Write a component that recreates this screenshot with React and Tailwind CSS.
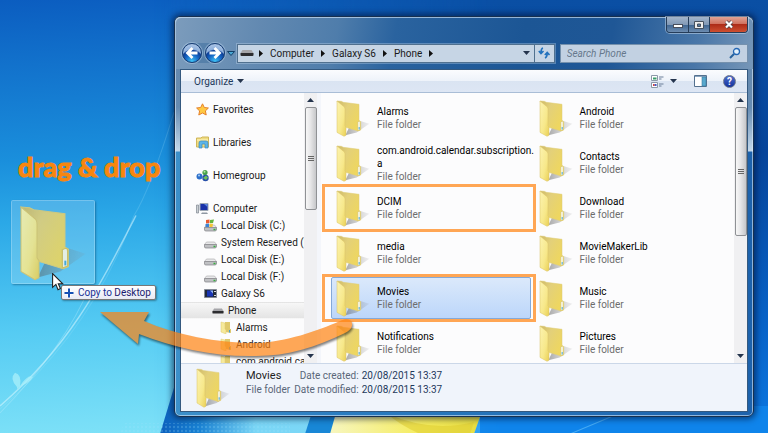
import { useState } from 'react'
import clsx from 'clsx'

const crumbs = ['Computer', 'Galaxy S6', 'Phone']

const tree = [
  { name: 'Favorites', icon: 'star', level: 0 },
  { name: 'Libraries', icon: 'library', level: 0 },
  { name: 'Homegroup', icon: 'homegroup', level: 0 },
  { name: 'Computer', icon: 'computer', level: 0 },
  { name: 'Local Disk (C:)', icon: 'system', level: 1 },
  { name: 'System Reserved (D:)', icon: 'disk', level: 1 },
  { name: 'Local Disk (E:)', icon: 'disk', level: 1 },
  { name: 'Local Disk (F:)', icon: 'disk', level: 1 },
  { name: 'Galaxy S6', icon: 'device', level: 1 },
  { name: 'Phone', icon: 'phone', level: 2 },
  { name: 'Alarms', icon: 'folder', level: 3 },
  { name: 'Android', icon: 'folder', level: 3 },
  { name: 'com.android.ca', icon: 'folder', level: 3 },
]

const files = [
  { name: 'Alarms' },
  { name: 'Android' },
  { name: 'com.android.calendar.subscription.a' },
  { name: 'Contacts' },
  { name: 'DCIM', marked: true },
  { name: 'Download' },
  { name: 'media' },
  { name: 'MovieMakerLib' },
  { name: 'Movies', marked: true },
  { name: 'Music' },
  { name: 'Notifications' },
  { name: 'Pictures' },
]

const indent = ['pl-3.5', 'pl-5.5', 'pl-7.5', 'pl-9.5']

export default function App() {
  const [selected, setSelected] = useState('Movies')

  return (
    <main className="relative flex min-h-screen overflow-hidden bg-[#1583d8] font-[Roboto,'Open_Sans',sans-serif] text-[10px] leading-[13px] text-[#1a1a1a]">
      <Wallpaper />
      <DragSource />
      <section className="relative mt-4 mr-3.5 mb-[17px] flex min-w-0 flex-1 flex-col self-start rounded-md border border-[#17304f] bg-[linear-gradient(180deg,#6488ad_0,#668bb1_90px,#c3d8eb_134px,transparent_135px),linear-gradient(90deg,#3c90ca,#2a7cc0_30%,#1d62ac)] px-[5px] pb-1 shadow-[0_0_6px_2px_rgba(0,15,50,0.6),inset_0_0_0_1px_rgba(220,235,250,0.6)]">
        <TitleBar />
        <div className="relative border border-[#34597f] bg-[#fcfcfd]">
          <Toolbar />
          <div className="flex h-[270px] overflow-hidden">
            <FolderTree />
            <ScrollBar thumb="h-[103px]" />
            <div className="w-1 shrink-0 bg-[#f4f6fb]" />
            <FileList selected={selected} onSelect={setSelected} />
            <ScrollBar thumb="h-[129px]" />
          </div>
          <Details name={selected} />
        </div>
      </section>
      <DragArrow />
    </main>
  )
}

function Wallpaper() {
  return (
    <div className="absolute inset-0 bg-[linear-gradient(177deg,#0b5dc0_0%,#1272cc_14%,#1a8fdc_34%,#2ba8e7_47%,#55cbf3_70%,#8ae8f9_100%)]">
      <div className="absolute inset-0 bg-[linear-gradient(180deg,#0a4fa4_0%,#06449a_35%,#0863c8_75%,#0c78e2_100%)] [mask-image:linear-gradient(90deg,transparent_20%,black_65%)]" />
      <svg viewBox="0 0 768 433" preserveAspectRatio="none" className="absolute inset-0 size-full">
        <defs>
          <linearGradient id="band" x1="0" x2="1">
            <stop offset="0" stopColor="#0b60bd" />
            <stop offset="0.12" stopColor="#1880d2" />
            <stop offset="0.3" stopColor="#7ad6f6" />
            <stop offset="1" stopColor="#80dcf8" />
          </linearGradient>
          <linearGradient id="gold" x1="0" x2="1">
            <stop offset="0" stopColor="#f7f6bf" />
            <stop offset="0.6" stopColor="#f5ec5d" />
            <stop offset="1" stopColor="#e6dc3e" />
          </linearGradient>
          <pattern id="dots" width="4" height="4" patternUnits="userSpaceOnUse">
            <circle cx="2" cy="2" r="0.8" fill="#9fe2fa" fillOpacity="0.5" />
          </pattern>
        </defs>
        <path d="M176 380L160 433H480V380Z" fill="url(#band)" />
        <path d="M124 422H290V433H120Z" fill="url(#dots)" />
        <path d="M314 405L305 433H332L338 405Z" fill="#1887d6" />
        <path d="M338 405L330 433H474L484 405Z" fill="url(#gold)" />
        <path d="M386 412Q430 432 474 421L470 433H420Q400 424 386 412Z" fill="#e0cf35" fillOpacity="0.6" />
        <path d="M484 405L474 433H768V405Z" fill="#118af0" fillOpacity="0.7" />
        <path d="M570 433L620 412" stroke="#6bc4fa" strokeOpacity="0.6" fill="none" />
        <path d="M174 112Q150 190 134 215Q92 330 0 408" stroke="#b9f0fd" strokeOpacity="0.18" fill="none" />
        <path d="M136 215C100 285 70 345 0 405" stroke="#d8f7ff" strokeOpacity="0.55" strokeWidth="1.5" fill="none" />
        <path d="M90 285Q66 345 0 412" stroke="#c9f4ff" strokeOpacity="0.3" fill="none" />
        <path d="M17 386Q9 378 15 372Q22 374 20 385Q28 373 33 376Q30 382 21 385L17 388Z" fill="#a9effa" fillOpacity="0.75" />
      </svg>
    </div>
  )
}

function DragSource() {
  return (
    <aside className="relative w-[174px] shrink-0 pt-[153px]">
      <p className="pl-[18px] font-[Lato,sans-serif] text-[27px] leading-7 font-black whitespace-nowrap text-[#f7860f] [-webkit-text-stroke:1px_#f7860f]">drag &amp; drop</p>
      <div className="mt-[19px] ml-[11px] flex h-[84px] w-[84px] justify-center rounded-xs border border-white/25 bg-white/20 pt-1 opacity-90 shadow-[1px_1px_2px_rgba(0,60,100,0.5)]">
        <FolderIcon className="h-[76px] w-[68px]" />
      </div>
      <svg viewBox="0 0 20 30" className="absolute top-[273px] left-[52px] h-[18px] w-3">
        <path d="M1 1V24L6.500 19L10 28L14 26L10.500 18H18Z" fill="#fff" stroke="#222" strokeWidth="1.800" />
      </svg>
      <div className="absolute top-[285px] left-[61px] flex h-[15px] items-center gap-1 rounded-xs border border-[#777] bg-[linear-gradient(#fff,#e8eaf4)] px-0.5 pr-1 whitespace-nowrap text-[#172f94] shadow-[1px_1px_2px_rgba(0,0,0,0.35)]">
        <svg viewBox="0 0 10 10" className="size-2.5">
          <path d="M5 1V9M1 5H9" stroke="#fff" strokeWidth="3.500" />
          <path d="M5 0.500V9.500M0.500 5H9.500" stroke="#1550b4" strokeWidth="2" />
        </svg>
        <span>Copy to <span className="text-[#1b1b70]">Desktop</span></span>
      </div>
    </aside>
  )
}

function DragArrow() {
  return (
    <svg viewBox="0 0 260 52" className="pointer-events-none absolute top-[309px] left-[98px] h-[52px] w-[260px] opacity-70 drop-shadow-[1px_2px_1px_rgba(0,0,0,0.7)]">
      <path
        d="M2 3H51L46 12C78 26 118 34 158 34C188 33 219 22 242 12C248 9 253 10 254 14C255 19 251 22 247 24C218 38 190 47 158 47C116 48 77 39 41 25L40 35Z"
        fill="#ff8412"
      />
    </svg>
  )
}

function TitleBar() {
  return (
    <header className="-mx-[5px] flex flex-col rounded-t-md bg-[linear-gradient(100deg,#7c9cbc_0%,#6289b1_15%,#4f7dab_28%,#2a639f_38%,#1c5695_60%,#1f5796_75%,#4a77a8_90%,#7797b8_100%)] px-[5px] pb-[5px] shadow-[inset_0_1px_0_rgba(210,230,250,0.65),inset_1px_0_0_rgba(210,230,250,0.5)]">
      <div className="flex h-[16px] self-end overflow-hidden rounded-b-sm border border-t-0 border-[#263d59] shadow-[0_0_0_1px_rgba(220,235,250,0.45)]">
        <button aria-label="Minimize" className="flex w-[22px] items-center justify-center border-r border-[#263d59] bg-[linear-gradient(#a3b5cb_0,#8299b6_50%,#3e6490_51%,#6d8db1)]">
          <span className="mt-0.5 h-1 w-2.5 border border-[#4a4f5c] bg-white" />
        </button>
        <button aria-label="Maximize" className="flex w-[21px] items-center justify-center border-r border-[#263d59] bg-[linear-gradient(#a3b5cb_0,#8299b6_50%,#3e6490_51%,#6d8db1)]">
          <svg viewBox="0 0 10 8" className="h-2 w-2.5">
            <path d="M0.500 0.500H9.500V7.500H0.500Z" fill="#eee" stroke="#46505e" />
            <path d="M3.500 3H6.500V5.500H3.500Z" fill="#57799f" stroke="#46505e" />
          </svg>
        </button>
        <button aria-label="Close" className="flex w-[37px] items-center justify-center bg-[linear-gradient(#e0a394_0,#cf6f5c_48%,#ad2c18_50%,#ce4f30)]">
          <svg viewBox="0 0 10 9" className="h-[9px] w-2.5">
            <path d="M2 1.500L8 7.500M8 1.500L2 7.500" stroke="#4b4046" strokeWidth="3.600" />
            <path d="M2 1.500L8 7.500M8 1.500L2 7.500" stroke="#fff" strokeWidth="2.200" />
          </svg>
        </button>
      </div>
      <div className="mt-[9px] flex h-[22px] items-center pl-0.5">
        <div className="flex gap-[3px] rounded-full bg-[#4473a0]/60">
          <NavButton label="Back" />
          <NavButton label="Forward" flip />
        </div>
        <button aria-label="Recent pages" className="ml-0.5 flex w-2 justify-center">
          <svg viewBox="0 0 8 5" className="h-[5px] w-2">
            <path d="M0.500 0.500H7.500L4 4.500Z" fill="#49a7d4" stroke="#123f68" />
          </svg>
        </button>
        <div className="ml-0.5 flex h-[19px] min-w-0 flex-[315] items-center border border-[#51718f] bg-[#c6d5e5] shadow-[0_0_0_1px_rgba(200,220,240,0.35)]">
          <PhoneIcon className="mr-[-2px] ml-0.5 h-2 w-3.5" />
          {crumbs.map((crumb) => (
            <span key={crumb} className="flex items-center">
              <Caret className="mx-[7px] h-[7px] w-1" />
              <button>{crumb}</button>
            </span>
          ))}
          <Caret className="mx-[7px] h-[7px] w-1" />
          <button aria-label="Previous locations" className="ml-auto pr-1">
            <DownArrow />
          </button>
          <button aria-label="Refresh" className="flex h-full w-5 items-center justify-center border-l border-[#51718f]">
            <svg viewBox="0 0 12 12" className="size-3" fill="none" stroke="#2272bd" strokeWidth="1.600">
              <path d="M5 1Q3 1.500 3 5.500M0.800 4L3 6.500L5.500 4" />
              <path d="M7 11Q9.300 10 9.200 6M6.800 8L9.200 5.500L11.500 8" />
            </svg>
          </button>
        </div>
        <label className="ml-[5px] flex h-[19px] min-w-0 flex-[174] items-center border border-[#7591ad] bg-[#c2d1e2] px-1.5">
          <input type="text" aria-label="Search Phone" placeholder="Search Phone" className="min-w-0 flex-1 bg-transparent italic outline-none placeholder:text-[#66788c]" />
          <svg viewBox="0 0 12 12" className="size-3" fill="none">
            <path d="M1 11L5 7" stroke="#27629c" strokeWidth="2" />
            <circle cx="7.500" cy="4.500" r="3" fill="#e4f2fc" stroke="#2467b4" strokeWidth="1.300" />
          </svg>
        </label>
      </div>
    </header>
  )
}

function NavButton({ label, flip }) {
  return (
    <button aria-label={label} className="size-5 rounded-full border border-[#173d73] bg-[radial-gradient(circle_at_50%_95%,#3fc3f5_0%,#1565c4_35%,#0d3f97_55%,#8fb1dd_62%,#b7cde9_100%)] shadow-[0_0_0_1px_rgba(190,215,240,0.45)]">
      <svg viewBox="0 0 18 18" className={clsx('size-[18px]', flip && 'rotate-180')}>
        <path d="M9.500 4L4.500 9L9.500 14M5 9H14.500" fill="none" stroke="#fff" strokeWidth="2.800" />
      </svg>
    </button>
  )
}

function Toolbar() {
  return (
    <div className="flex h-[23px] items-center border-b border-[#a9bdd6] bg-[linear-gradient(#fbfcfe_0,#eef3fa_48%,#dae4f2_50%,#dde6f4)] pr-[11px] pl-[13px] text-[#1e395b]">
      <button className="flex items-center gap-1">
        Organize <DownArrow />
      </button>
      <button aria-label="Change your view" className="ml-auto">
        <svg viewBox="0 0 13 13" className="size-[13px]">
          <path d="M0.500 0.500H6.500V5.500H0.500ZM0.500 7.500H6.500V12.500H0.500Z" fill="#fff" stroke="#8b98a8" />
          <path d="M2 3.500H5.500" stroke="#399c69" strokeWidth="2" />
          <path d="M2 10H3.700" stroke="#d04444" strokeWidth="2" />
          <path d="M3.700 10H5.500" stroke="#3b55c5" strokeWidth="2" />
          <path d="M8 2H12.500M8 4H10.500M8 9H12.500M8 11H10.500" stroke="#6a7f99" />
        </svg>
      </button>
      <button aria-label="More view options" className="mr-[17px] ml-1.5">
        <DownArrow />
      </button>
      <button aria-label="Show the preview pane">
        <svg viewBox="0 0 13 12" className="h-3 w-[13px]">
          <path d="M0.500 0.500H12.500V11.500H0.500Z" fill="#fff" stroke="#54718f" />
          <path d="M1 1.500H12" stroke="#8ba5c0" />
          <path d="M8 2H12V11H8Z" fill="#58a8cd" stroke="#39799f" strokeWidth="0.600" />
        </svg>
      </button>
      <button aria-label="Help" className="ml-4 size-[13px] rounded-full border border-[#6b7589] bg-[linear-gradient(#4d6ccc,#12329d)] text-[10px] leading-[11px] font-bold text-white">
        ?
      </button>
    </div>
  )
}

function FolderTree() {
  return (
    <ul className="w-[123px] shrink-0 overflow-hidden pt-2">
      {tree.map((node, i) => (
        <li key={node.name + i} className={clsx(i < 3 && 'mb-4')}>
          <button
            className={clsx(
              'flex h-[17px] w-full items-center gap-1 border border-transparent whitespace-nowrap',
              indent[node.level],
              node.name === 'Phone' && 'border-[#dcdcdc] bg-[linear-gradient(#f7f7f7,#e4e4e4)]',
            )}
          >
            <TreeIcon type={node.icon} />
            {node.name}
          </button>
        </li>
      ))}
    </ul>
  )
}

function FileList({ selected, onSelect }) {
  return (
    <ul className="grid min-w-0 flex-1 grid-cols-2 content-start gap-x-[3px] gap-y-[3px] pt-1 pr-px pl-2.5">
      {files.map((file) => (
        <li key={file.name} className="relative min-w-0">
          <button
            onClick={() => onSelect(file.name)}
            className={clsx(
              'flex h-[42px] w-full items-center rounded-xs border pl-1 text-left',
              file.name === selected
                ? 'border-[#84a9d8] bg-[linear-gradient(#dbe9fb,#bcd6fa)]'
                : 'border-transparent',
            )}
          >
            <FolderIcon className="h-[37px] w-[34px] shrink-0" />
            <span className="-mr-1.5 ml-[7px] min-w-0 flex-1">
              <span className="block break-words text-black">
                {file.name.split('.').map((part, i) => (
                  <span key={i}>{i > 0 && <>.<wbr /></>}{part}</span>
                ))}
              </span>
              <span className="block text-[#6d6d6d]">File folder</span>
            </span>
          </button>
          {file.marked && (
            <span className="pointer-events-none absolute -inset-y-[3px] -right-[5px] -left-[9px] border-3 border-[#ffa654]" />
          )}
        </li>
      ))}
    </ul>
  )
}

function ScrollBar({ thumb }) {
  return (
    <div className="flex w-[13px] shrink-0 flex-col items-center bg-[#f0f0f2]">
      <button aria-label="Scroll up" className="flex h-3.5 items-center">
        <DownArrow className="rotate-180" />
      </button>
      <div className={clsx('flex w-3 flex-col items-center justify-center gap-px rounded-xs border border-[#8f9195] bg-[linear-gradient(90deg,#f7f7f7,#e6e6e8_45%,#c6c7ca)]', thumb)}>
        <span className="h-px w-1.5 bg-[#666]" />
        <span className="h-px w-1.5 bg-[#666]" />
        <span className="h-px w-1.5 bg-[#666]" />
      </div>
      <button aria-label="Scroll down" className="mt-auto flex h-3.5 items-center">
        <DownArrow />
      </button>
    </div>
  )
}

function Details({ name }) {
  return (
    <footer className="flex h-[48px] items-start gap-4 border-t border-[#cbd7e8] bg-[#f0f4fb] pt-1 pl-[15px]">
      <FolderIcon className="h-10 w-[34px]" />
      <div className="flex gap-1 pt-px leading-[14px]">
        <div>
          <p className="text-[11px] text-[#1e1e1e]">{name}</p>
          <p className="text-[#5a6779]">File folder</p>
        </div>
        <dl className="grid grid-cols-[auto_auto] gap-x-[3px] text-[#1e395b]">
          <dt className="text-right text-[#5a6779]">Date created:</dt>
          <dd>20/08/2015 13:37</dd>
          <dt className="text-right text-[#5a6779]">Date modified:</dt>
          <dd>20/08/2015 13:37</dd>
        </dl>
      </div>
    </footer>
  )
}

function Caret({ className }) {
  return (
    <svg viewBox="0 0 4 7" className={className}>
      <path d="M0 0L4 3.500L0 7Z" fill="#111" />
    </svg>
  )
}

function DownArrow({ className }) {
  return (
    <svg viewBox="0 0 7 4" className={clsx('h-1 w-[7px]', className)}>
      <path d="M0 0H7L3.500 4Z" fill="#24344d" />
    </svg>
  )
}

function PhoneIcon({ className }) {
  return (
    <svg viewBox="0 0 14 8" className={className}>
      <path d="M2.500 1H11.500L13.500 4H0.500Z" fill="#a5a5a9" />
      <path d="M0.500 4H13.500V6Q13.500 7 12.500 7H1.500Q0.500 7 0.500 6Z" fill="#2d2d30" />
    </svg>
  )
}

function FolderIcon({ className }) {
  return (
    <svg viewBox="0 0 102 112" preserveAspectRatio="none" className={className}>
      <defs>
        <linearGradient id="folderBack" x1="0" x2="1" y2="0.6">
          <stop offset="0" stopColor="#cdb968" />
          <stop offset="0.4" stopColor="#e3d07a" />
          <stop offset="1" stopColor="#efd75e" />
        </linearGradient>
        <linearGradient id="folderFlap" x1="0" x2="1" y1="0" y2="1">
          <stop offset="0" stopColor="#fcf3b0" />
          <stop offset="0.6" stopColor="#f7e88a" />
          <stop offset="1" stopColor="#e9cf55" />
        </linearGradient>
        <linearGradient id="folderShade" x1="0" x2="1">
          <stop offset="0" stopColor="#555" stopOpacity="0.5" />
          <stop offset="1" stopColor="#888" stopOpacity="0.12" />
        </linearGradient>
      </defs>
      <path d="M68 62L100 72L62 98L28 107L40 82Z" fill="url(#folderShade)" />
      <path d="M3 3L16 4L22 7L69 13V62L74 65V91L66 94L26 82Z" fill="url(#folderBack)" stroke="#dfcc76" strokeWidth="1.500" />
      <path d="M65 66Q73 61 73 68V90L65 93Z" fill="#f6f5e5" stroke="#d9c25d" strokeWidth="2" />
      <path d="M68 82H71V89H68Z" fill="#46a7d8" />
      <path d="M3 3L25 21Q27 24 27 28V78L30 82V107L24 110L3 98Z" fill="url(#folderFlap)" stroke="#dcc568" strokeWidth="1.500" />
    </svg>
  )
}

function TreeIcon({ type }) {
  if (type === 'folder') {
    return (
      <svg viewBox="0 0 12 13" className="h-[13px] w-3 shrink-0">
        <path d="M5 1H10V8H11V12L5 11Z" fill="#dfc96d" />
        <path d="M1 1L5 2V8L6 9V13L1 11Z" fill="#f6e99b" stroke="#dfcb70" strokeWidth="0.500" />
        <path d="M9.500 9V11.500" stroke="#4aa3c9" />
      </svg>
    )
  }
  if (type === 'phone') return <PhoneIcon className="h-2 w-3 shrink-0" />
  return (
    <svg viewBox="0 0 13 13" className="size-[13px] shrink-0">
      {type === 'star' && (
        <path d="M6.500 0.800L8.300 4.500L12.400 5L9.400 7.900L10.200 12L6.500 10L2.800 12L3.600 7.900L0.600 5L4.700 4.500Z" fill="#ffc943" stroke="#e5802a" />
      )}
      {type === 'library' && (
        <>
          <path d="M0.500 2H5L6 1H12.500V11H0.500Z" fill="#eedb80" stroke="#d0b658" />
          <path d="M1 4H12" stroke="#fff6c4" />
          <path d="M3 12V7Q3 5 5 5H10Q12 5 12 7V12H9V8H6V12Z" fill="#5db5e8" stroke="#3a89be" strokeWidth="0.700" />
        </>
      )}
      {type === 'homegroup' && (
        <>
          <circle cx="9" cy="3.500" r="2.600" fill="#48a34a" />
          <circle cx="3.500" cy="7.500" r="3" fill="#2c6fca" />
          <circle cx="9.500" cy="9" r="3.200" fill="#264fa8" />
          <circle cx="8.500" cy="2.800" r="1" fill="#b7e6a5" />
          <circle cx="3" cy="6.500" r="1" fill="#a9d0f4" />
          <path d="M7 9L10 6.500L12 8.500L10 11Z" fill="#6cc05b" />
        </>
      )}
      {type === 'computer' && (
        <>
          <path d="M0.500 3H2.500V11H0.500Z" fill="#ccd0d5" stroke="#7e8790" strokeWidth="0.700" />
          <path d="M4 1.500H12V8.500H4Z" fill="#1a32a8" stroke="#9ca6b3" />
          <path d="M8 2L11.500 5V2Z" fill="#5b87df" />
          <path d="M6 10.500H11L12 12H5Z" fill="#8f98a3" />
        </>
      )}
      {(type === 'disk' || type === 'system') && (
        <>
          <path d="M2.500 6H10.500L12.500 8.500H0.500Z" fill="#e8e8ea" stroke="#a6a6a9" strokeWidth="0.600" />
          <path d="M0.500 8.500H12.500V11Q12 12 11 12H2Q0.500 12 0.500 11Z" fill="#bfc0c3" stroke="#838387" strokeWidth="0.700" />
          <path d="M9.500 10.500H11.500" stroke="#36ad3f" strokeWidth="1.500" />
        </>
      )}
      {type === 'system' && (
        <>
          <path d="M2 1L5.500 0.500V4L2 4.500Z" fill="#e85b30" />
          <path d="M6 1L10 0.500L9 4L6 4.300Z" fill="#65b43c" />
          <path d="M1.500 5L5 4.500V8H1.500Z" fill="#3c83d5" />
          <path d="M5.500 4.800H9L8.500 8H5.500Z" fill="#f5c534" />
        </>
      )}
      {type === 'device' && (
        <>
          <path d="M0.500 2.500H12.500V10.500H0.500Z" fill="#222a3b" stroke="#848a96" />
          <path d="M3 3.500H9V9.500H3Z" fill="#1935b5" />
          <path d="M6 3.500H9V6.500Z" fill="#93b6f2" />
          <path d="M10 4.500H12M10 8.500H12" stroke="#ddd" />
        </>
      )}
    </svg>
  )
}
